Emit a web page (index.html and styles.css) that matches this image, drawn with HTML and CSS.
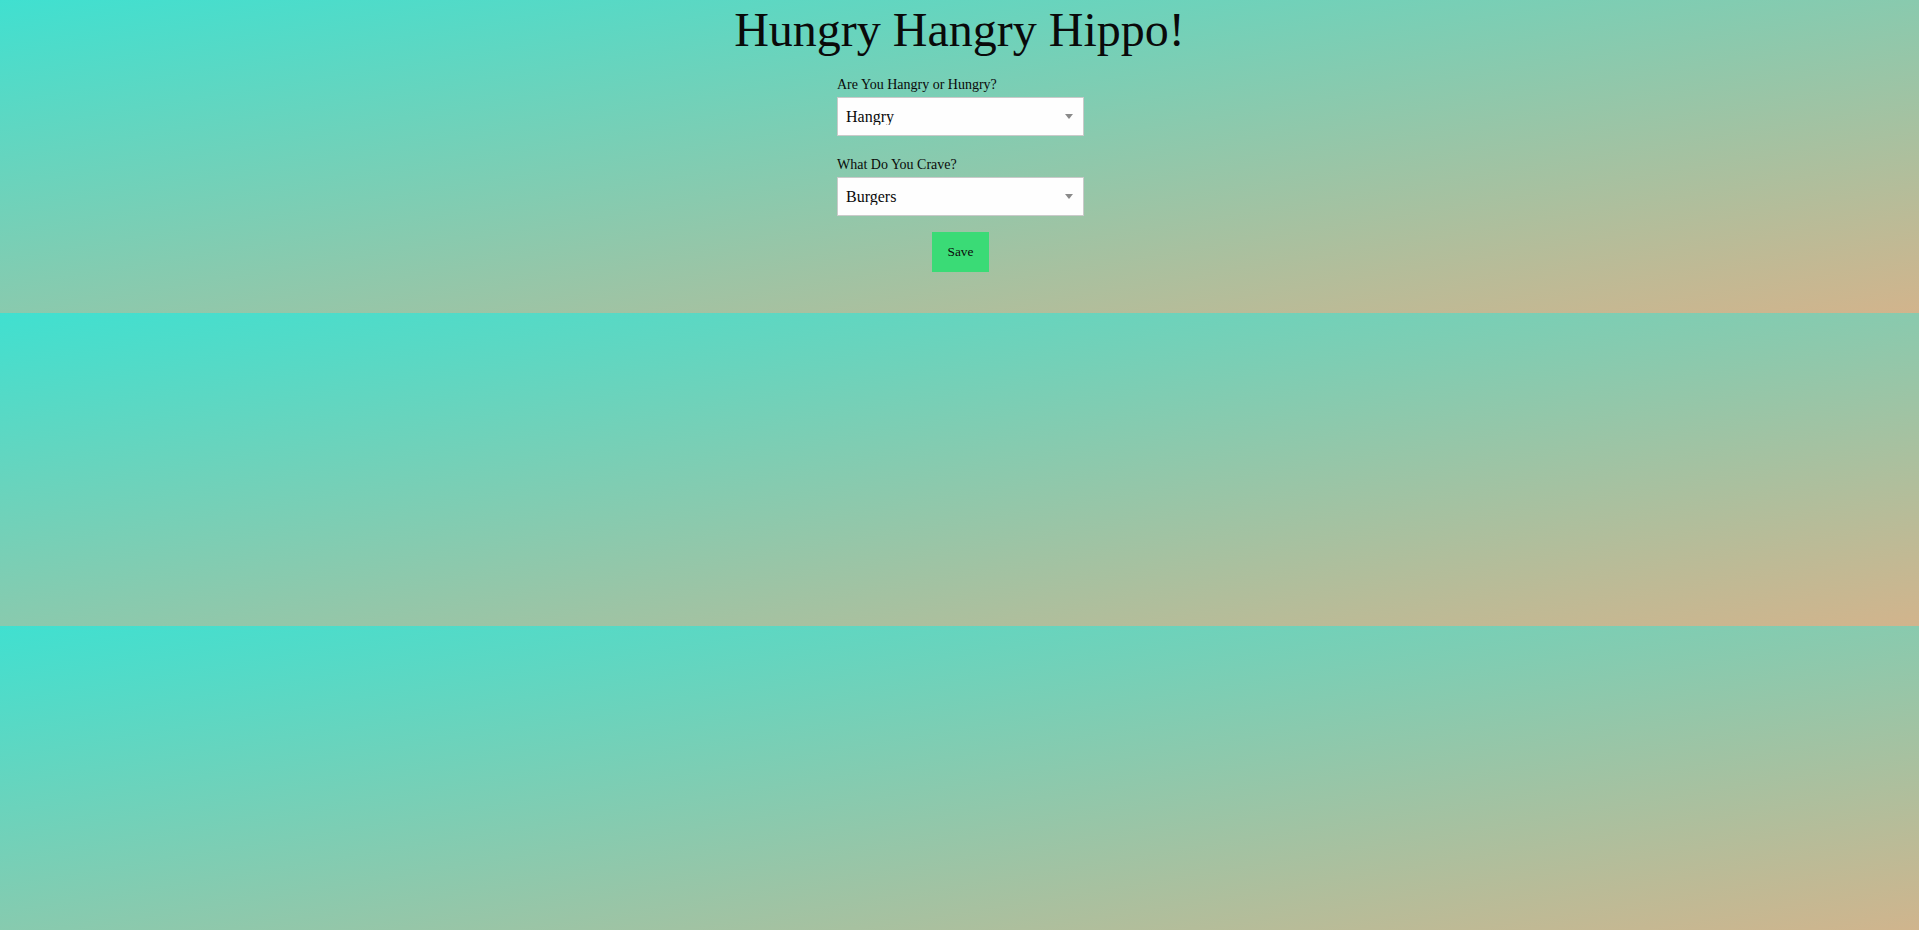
FILE: index.html
```html
<!DOCTYPE html>
<html lang="en">
<head>
<meta charset="utf-8">
<title>Hungry Hangry Hippo!</title>
<link rel="stylesheet" href="styles.css">
</head>
<body>
  <h1 class="title">Hungry Hangry Hippo!</h1>
  <form class="order-form">
    <div class="field">
      <label class="field-label" for="mood">Are You Hangry or Hungry?</label>
      <div class="select-wrap">
        <select id="mood" class="field-select">
          <option>Hangry</option>
          <option>Hungry</option>
        </select>
      </div>
    </div>
    <div class="field">
      <label class="field-label" for="crave">What Do You Crave?</label>
      <div class="select-wrap">
        <select id="crave" class="field-select">
          <option>Burgers</option>
          <option>Pizza</option>
          <option>Tacos</option>
        </select>
      </div>
    </div>
    <button type="button" class="save-btn">Save</button>
  </form>
</body>
</html>
```

FILE: styles.css
```css
html {
  margin: 0;
}

body {
  margin: 0;
  padding: 3px 0 41px;
  font-family: "Liberation Serif", "Times New Roman", serif;
  color: #0a0a0a;
  background: linear-gradient(to bottom right, #40e0d0, #d2b48c);
}

.title {
  margin: 0;
  font-size: 48px;
  line-height: 53px;
  font-weight: normal;
  text-align: center;
}

.order-form {
  width: 247px;
  margin: 21px 0 0 calc(50% - 122.5px);
  display: flex;
  flex-direction: column;
}

.field {
  display: flex;
  flex-direction: column;
}

.field + .field {
  margin-top: 21px;
}

.field-label {
  display: block;
  font-size: 14px;
  line-height: 16px;
  margin-bottom: 4px;
}

.select-wrap {
  position: relative;
}

.select-wrap::after {
  content: "";
  position: absolute;
  right: 11px;
  top: 17px;
  width: 0;
  height: 0;
  border-left: 4px solid transparent;
  border-right: 4px solid transparent;
  border-top: 5px solid #8a8a8a;
  pointer-events: none;
}

.field-select {
  -webkit-appearance: none;
  appearance: none;
  display: block;
  width: 100%;
  height: 39px;
  margin: 0;
  padding: 0 24px 0 8px;
  border: 1px solid #cacaca;
  border-radius: 0;
  background: #fefefe;
  font-family: "Liberation Serif", "Times New Roman", serif;
  font-size: 16px;
  color: #0a0a0a;
  outline: none;
}

.save-btn {
  align-self: center;
  margin-top: 16px;
  padding: 12px 16px;
  border: none;
  border-radius: 0;
  background: #3adb76;
  color: #0a0a0a;
  font-family: "Liberation Serif", "Times New Roman", serif;
  font-size: 13.33px;
  line-height: 16px;
  cursor: pointer;
}
```
